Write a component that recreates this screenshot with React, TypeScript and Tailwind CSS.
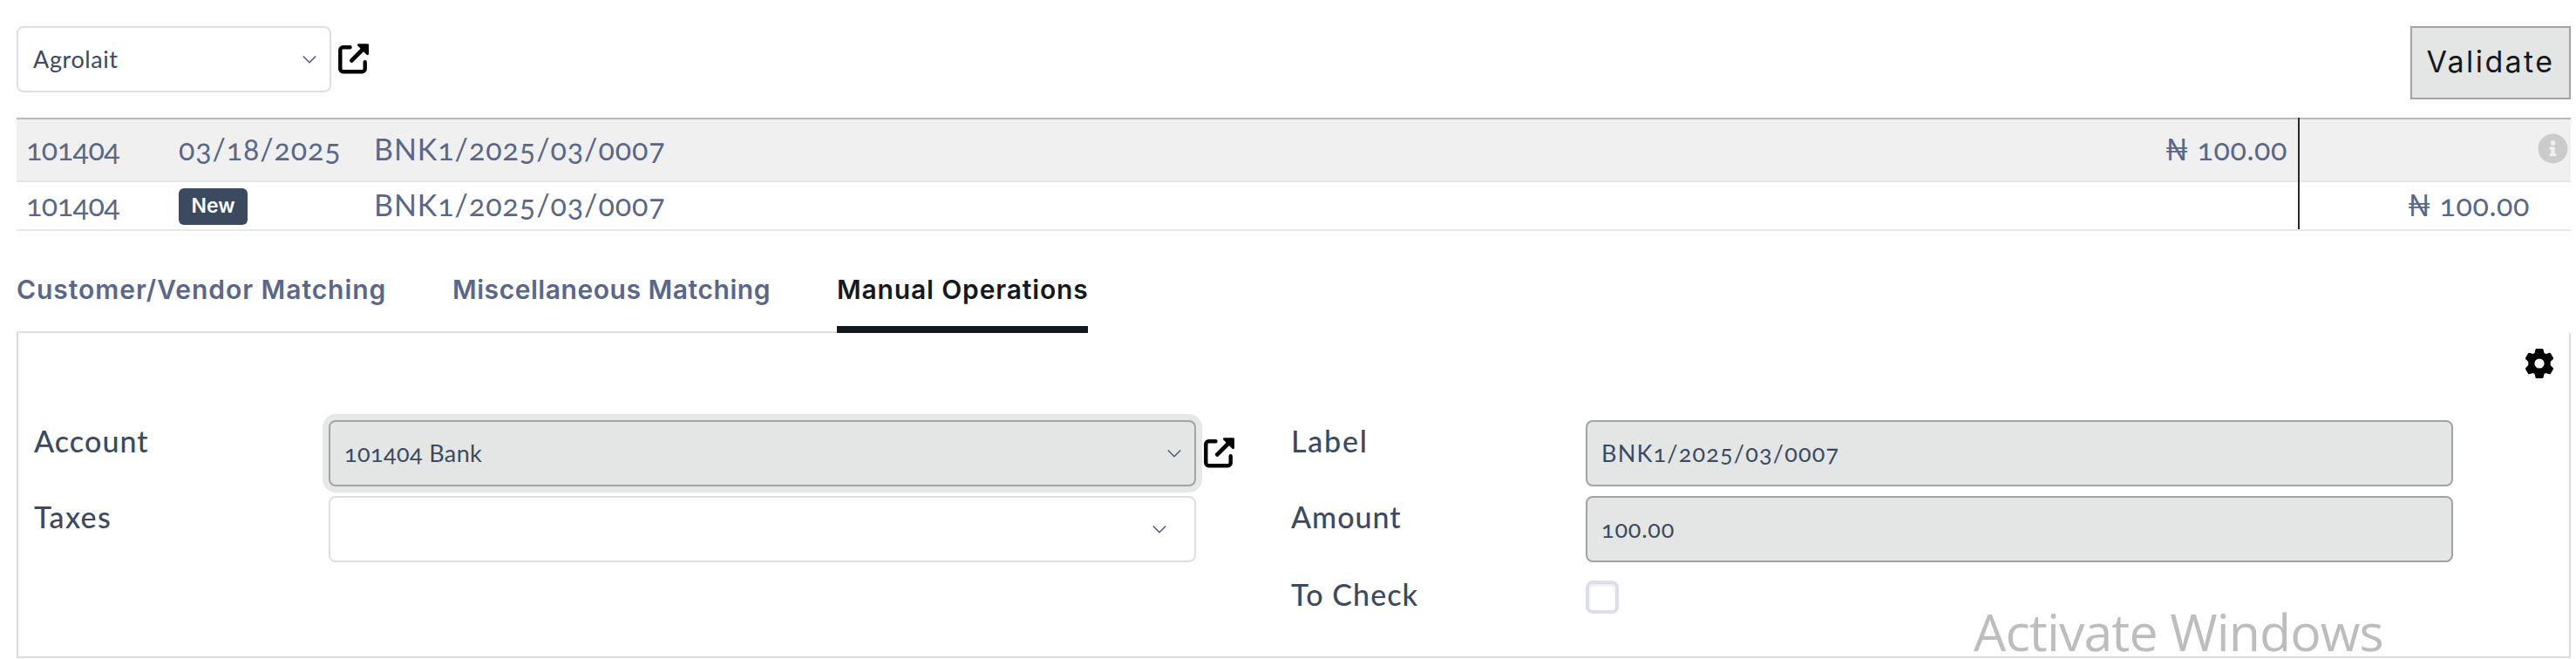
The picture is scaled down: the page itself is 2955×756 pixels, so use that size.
import type { ReactNode } from "react";
import clsx from "clsx";
import { FaInfoCircle } from "react-icons/fa";

function LaunchIcon() {
  return (
    <svg className="h-9 w-9 shrink-0 text-black" viewBox="0 0 36 36" fill="none" stroke="currentColor">
      <path
        d="M13.5 4.3H5.5a3.2 3.2 0 0 0-3.2 3.2V29a3.2 3.2 0 0 0 3.2 3.2h22a3.2 3.2 0 0 0 3.2-3.2v-7.8"
        strokeWidth="4.4"
        strokeLinecap="round"
      />
      <path d="M15.4 19.4 28.5 6.3" strokeWidth="4.8" strokeLinecap="round" />
      <path d="M23.4 1.6h10.2v10.2z" fill="currentColor" strokeWidth="2.8" strokeLinejoin="round" />
    </svg>
  );
}

function GearIcon() {
  return (
    <svg className="h-[34px] w-8 text-black" viewBox="0 0 32 34" fill="currentColor" fillRule="evenodd">
      <path d="M12.6 0h6.8q.9 0 1.1.9l1 4 2 1.1 4-1.2q.9-.2 1.4.5l3 5.2q.4.8-.2 1.5l-3 2.9v4.2l3 2.9q.6.7.2 1.5l-3 5.2q-.5.7-1.4.5l-4-1.2-2 1.1-1 4q-.2.9-1.1.9h-6.8q-.9 0-1.1-.9l-1-4-2-1.1-4 1.2q-.9.2-1.4-.5l-3-5.2q-.4-.8.2-1.5l3-2.9v-4.2l-3-2.9q-.6-.7-.2-1.5l3-5.2q.5-.7 1.4-.5l4 1.2 2-1.1 1-4q.2-.9 1.1-.9zM16 11.4a5.6 5.6 0 1 0 0 11.2 5.6 5.6 0 0 0 0-11.2z" />
    </svg>
  );
}

function Chevron() {
  return (
    <svg className="h-[11px] w-4 text-[#4f5b78]" viewBox="0 0 16 11" fill="none" stroke="currentColor">
      <path d="m.8 1.5 7.2 7.2 7.2-7.2" strokeWidth="1.6" />
    </svg>
  );
}

interface FieldProps {
  className?: string;
  filled?: boolean;
  children?: ReactNode;
}

function Field({ className, filled, children }: FieldProps) {
  return (
    <div
      className={clsx(
        "flex h-[76px] shrink-0 items-center rounded-lg border-2 pl-4 text-[27px] text-[#3c4a60]",
        filled ? "border-[#a2a4a3] bg-[#e4e6e5]" : "border-[#dcdfeb] bg-white",
        className
      )}
    >
      {children}
    </div>
  );
}

function Label({ className, children }: { className: string; children: ReactNode }) {
  return (
    <div className={clsx("w-[338px] shrink-0 text-[34px] leading-[48px] font-medium text-[#3c4a60]", className)}>
      {children}
    </div>
  );
}

export default function App() {
  return (
    <div className="relative h-[756px] w-[2955px] overflow-hidden bg-white pt-[30px] pl-[19px] font-['Lato',sans-serif] [font-feature-settings:'onum']">
      <div className="flex h-[105px] w-[2930px] items-start">
        <Field className="w-[361px] justify-between pr-[15px]">
          <span className="pl-px tracking-[0.6px]">Agrolait</span>
          <Chevron />
        </Field>
        <div className="mt-5 ml-2">
          <LaunchIcon />
        </div>
        <button className="ml-auto flex h-[84px] w-[184px] items-center justify-center border-2 border-[#a2a4a3] bg-[#e4e6e5] pb-1 font-['Inter',sans-serif] text-[34px] tracking-[2.4px] text-[#15191d]">
          Validate
        </button>
      </div>

      {/* statement lines */}
      <div className="w-[2930px] text-[34px] text-[#5a6788]">
        <div className="flex h-[74px] border-t-2 border-b-2 border-t-[#b8bab9] border-b-[#e8e8e8] bg-[#f0f0f0]">
          <div className="flex w-[174px] items-center pb-1 pl-[11px] tracking-[-0.5px]">101404</div>
          <div className="flex w-[225px] items-center pb-1 pl-3 tracking-[0.9px]">03/18/2025</div>
          <div className="flex flex-1 items-center pb-1 pl-[11px] tracking-[0.95px]">BNK1/2025/03/0007</div>
          <div className="-my-0.5 flex w-[200px] items-center justify-end border-r-2 border-[#26292c] pr-3 pb-1 tracking-[0.6px]">
            ₦ 100.00
          </div>
          <div className="flex w-[311px] items-center justify-end pr-[3px] pb-1">
            <FaInfoCircle className="size-[35px] text-[#cbcbcb]" />
          </div>
        </div>
        <div className="flex h-14 border-b-2 border-[#e8e8e8]">
          <div className="flex w-[174px] items-center pb-1 pl-[11px] tracking-[-0.5px]">101404</div>
          <div className="flex w-[225px] items-center pl-3">
            <span className="mt-0.5 flex h-[42px] w-[79px] items-center justify-center rounded-md bg-[#3c4a60] pb-0.5 font-['Inter',sans-serif] text-[23px] font-semibold text-white">
              New
            </span>
          </div>
          <div className="flex flex-1 items-center pb-1 pl-[11px] tracking-[0.95px]">BNK1/2025/03/0007</div>
          <div className="w-[200px] border-r-2 border-[#26292c]" />
          <div className="flex w-[311px] items-center justify-end pr-[47px] pb-1 tracking-[0.6px]">₦ 100.00</div>
        </div>
      </div>

      {/* tabs */}
      <div className="flex h-[117px] w-[1229px] font-['Inter',sans-serif] text-[30px] font-semibold whitespace-nowrap text-[#5a6788]">
        <div className="flex w-[500px] items-start border-b-2 border-[#dcdfeb] pt-[43px] leading-[48px] tracking-[0.95px]">
          Customer/Vendor Matching
        </div>
        <div className="flex w-[441px] items-start border-b-2 border-[#dcdfeb] pt-[43px] leading-[48px] tracking-[0.55px]">
          Miscellaneous Matching
        </div>
        <div className="flex w-[288px] items-start border-b-8 border-[#15191d] pt-[43px] leading-[48px] tracking-[0.85px] text-[#15191d]">
          Manual Operations
        </div>
      </div>

      <div className="h-[373px] w-[2930px] border-2 border-t-0 border-[#dcdcdc] pl-[18px]">
        <div className="flex h-[100px] justify-end pt-[18px] pr-[18px]">
          <GearIcon />
        </div>
        <div className="flex">
          <div className="flex w-[1442px] flex-col gap-[11px]">
            <div className="flex">
              <Label className="tracking-[1.1px]">Account</Label>
              <Field filled className="w-[995px] justify-between pr-[15px] shadow-[0_0_0_7px_#e6e8e7]">
                <span className="tracking-[0.4px]">101404 Bank</span>
                <Chevron />
              </Field>
              <div className="mt-5 ml-[9px]">
                <LaunchIcon />
              </div>
            </div>
            <div className="flex">
              <Label className="tracking-[1.3px]">Taxes</Label>
              <Field className="w-[995px] justify-end pr-8">
                <Chevron />
              </Field>
            </div>
          </div>
          <div className="flex flex-col gap-[11px]">
            <div className="flex">
              <Label className="tracking-[1.8px]">Label</Label>
              <Field filled className="w-[995px] tracking-[1.2px]">
                BNK1/2025/03/0007
              </Field>
            </div>
            <div className="flex">
              <Label className="tracking-[1px]">Amount</Label>
              <Field filled className="w-[995px] tracking-[0.8px]">
                100.00
              </Field>
            </div>
            <div className="flex pt-0.5">
              <Label className="tracking-[1.1px]">To Check</Label>
              <div className="mt-2 size-[38px] rounded-lg border-4 border-[#dcdfeb] shadow-[inset_0_2px_3px_#e8e8ee]" />
            </div>
          </div>
        </div>
      </div>

      <div className="absolute top-[694px] left-[2264px] font-['Open_Sans',sans-serif] text-[59px] leading-[60px] tracking-[-0.9px] whitespace-nowrap text-[#bdbdbd]">
        Activate Windows
      </div>
    </div>
  );
}
